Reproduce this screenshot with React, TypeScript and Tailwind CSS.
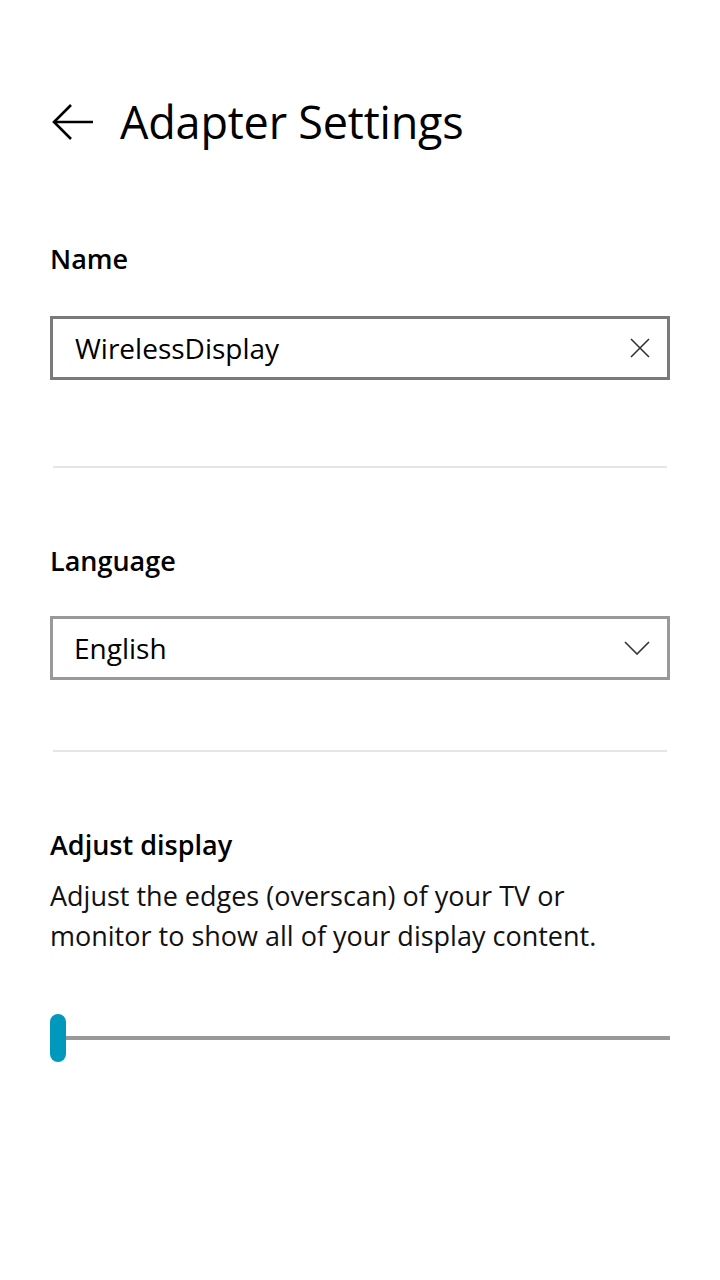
import { useState } from "react";

// Adapter settings page, phone-sized (Windows Mobile style)
export default function App() {
  const [name, setName] = useState("WirelessDisplay");

  return (
    <div className="w-[720px] h-[1280px] bg-white px-[50px] flex flex-col text-black font-['Open_Sans',sans-serif]">
      {/* Header */}
      <div className="mt-[92px] h-[60px] flex items-center">
        <button type="button" aria-label="Back" className="ml-[1px] flex items-center">
          <svg width="42" height="38" viewBox="0 0 42 38" fill="none" stroke="#000" strokeWidth="2.6">
            <path d="M42 19H3" />
            <path d="M20 2L3 19L20 36" />
          </svg>
        </button>
        <h1 className="ml-[27px] text-[45px] leading-[60px] font-normal tracking-[-0.2px]">Adapter Settings</h1>
      </div>

      {/* Name */}
      <div className="mt-[89px] text-[27px] leading-[36px] font-semibold">Name</div>
      <div className="mt-[39px] h-[64px] border-[3px] border-[#7a7a7a] flex items-center pl-[22px] pr-[17px]">
        <input
          value={name}
          onChange={(e) => setName(e.target.value)}
          className="flex-1 min-w-0 outline-none bg-transparent text-[28px] leading-[40px]"
        />
        <button type="button" aria-label="Clear" onClick={() => setName("")}>
          <svg width="20" height="20" viewBox="0 0 20 20" stroke="#333" strokeWidth="1.6">
            <path d="M1 1L19 19M19 1L1 19" />
          </svg>
        </button>
      </div>

      <div className="mt-[86px] mx-[3px] h-[2px] bg-[#e5e5e5]" />

      {/* Language */}
      <div className="mt-[75px] text-[27px] leading-[36px] font-semibold">Language</div>
      <div className="mt-[37px] h-[64px] border-[3px] border-[#999999] flex items-center pl-[21px] pr-[17px]">
        <span className="flex-1 text-[28px] leading-[40px]">English</span>
        <svg width="26" height="14" viewBox="0 0 26 14" fill="none" stroke="#333" strokeWidth="1.6">
          <path d="M1 1L13 13L25 1" />
        </svg>
      </div>

      <div className="mt-[70px] mx-[3px] h-[2px] bg-[#e5e5e5]" />

      {/* Adjust display */}
      <div className="mt-[75px] text-[27px] leading-[36px] font-semibold">Adjust display</div>
      <p className="mt-[13px] text-[27px] leading-[40px] text-[#111]">
        Adjust the edges (overscan) of your TV or
        <br />
        monitor to show all of your display content.
      </p>

      {/* Slider */}
      <div className="mt-[58px] h-[48px] flex items-center">
        <div className="w-[16px] h-[48px] rounded-full bg-[#0099bc]" />
        <div className="flex-1 h-[4px] bg-[#999999]" />
      </div>
    </div>
  );
}
